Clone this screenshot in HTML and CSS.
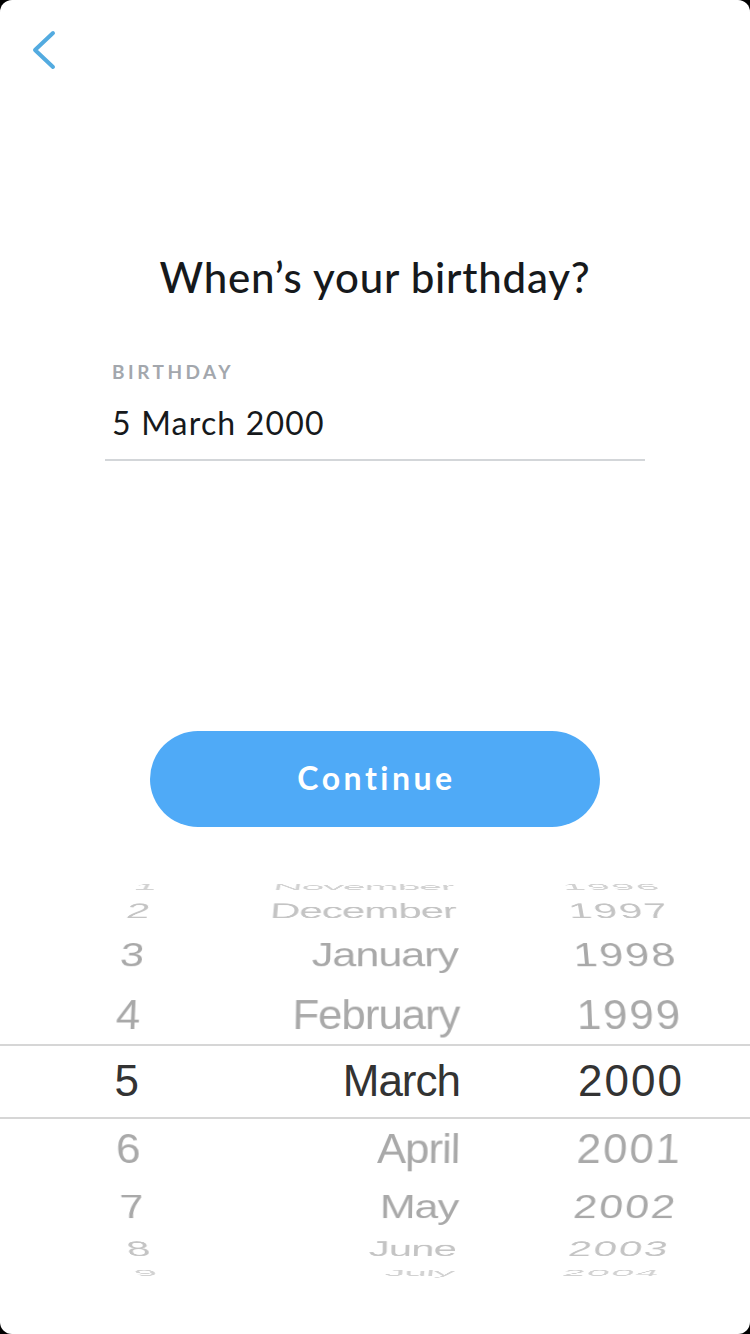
FILE: index.html
```html
<!DOCTYPE html>
<html lang="en">
<head>
<meta charset="utf-8">
<title>When's your birthday?</title>
<link rel="stylesheet" href="styles.css">
</head>
<body>
<div class="screen">
  <div class="topbar">
    <svg class="back" width="24" height="40" viewBox="0 0 24 40" aria-label="Back">
      <path d="M21 3 L3 20 L21 37" fill="none" stroke="#53abe0" stroke-width="4" stroke-linecap="round" stroke-linejoin="round"/>
    </svg>
  </div>
  <h1 class="title">When’s your birthday?</h1>
  <div class="field">
    <div class="label">BIRTHDAY</div>
    <div class="value">5 March 2000</div>
  </div>
  <button class="continue">Continue</button>
  <div class="picker">
    <div class="prow r-4"><span class="d">1</span><span class="m">November</span><span class="y">1996</span></div>
    <div class="prow r-3"><span class="d">2</span><span class="m">December</span><span class="y">1997</span></div>
    <div class="prow r-2"><span class="d">3</span><span class="m">January</span><span class="y">1998</span></div>
    <div class="prow r-1"><span class="d">4</span><span class="m">February</span><span class="y">1999</span></div>
    <div class="prow r0"><span class="d">5</span><span class="m">March</span><span class="y">2000</span></div>
    <div class="prow r1"><span class="d">6</span><span class="m">April</span><span class="y">2001</span></div>
    <div class="prow r2"><span class="d">7</span><span class="m">May</span><span class="y">2002</span></div>
    <div class="prow r3"><span class="d">8</span><span class="m">June</span><span class="y">2003</span></div>
    <div class="prow r4"><span class="d">9</span><span class="m">July</span><span class="y">2004</span></div>
    <div class="band"></div>
  </div>
</div>
</body>
</html>
```
FILE: styles.css
```css
html, body {
  margin: 0;
  padding: 0;
  background: #000;
}
.screen {
  width: 750px;
  height: 1334px;
  background: #fff;
  border-radius: 12px;
  overflow: hidden;
  display: flex;
  flex-direction: column;
  font-family: Lato, "Open Sans", sans-serif;
}
.topbar {
  height: 100px;
  box-sizing: border-box;
  padding: 30px 0 0 32px;
}
.back {
  display: block;
}
.title {
  margin: 152px 0 0;
  font-size: 42px;
  line-height: 50px;
  font-weight: 500;
  letter-spacing: 0.8px;
  color: #16191c;
  text-align: center;
}
.field {
  margin: 58px 0 0 105px;
  width: 540px;
  border-bottom: 2px solid #d3d6d9;
  padding-bottom: 16px;
}
.label {
  padding-left: 7px;
  font-size: 19px;
  line-height: 24px;
  font-weight: 700;
  letter-spacing: 3.5px;
  color: #a3a7ad;
}
.value {
  margin-top: 19px;
  padding-left: 7px;
  font-size: 32px;
  line-height: 40px;
  letter-spacing: 1.2px;
  color: #16191c;
}
.continue {
  margin: 270px auto 0;
  width: 450px;
  height: 96px;
  border: none;
  border-radius: 48px;
  background: #4faaf7;
  color: #fff;
  font-family: Lato, "Open Sans", sans-serif;
  font-size: 32px;
  font-weight: 700;
  letter-spacing: 3.5px;
  padding: 0 0 4px 3px;
}
.picker {
  margin-top: 51px;
  height: 406px;
  overflow: hidden;
  display: grid;
  grid-template-columns: 750px;
  align-items: center;
  font-family: "Liberation Sans", Arial, sans-serif;
}
.prow, .band {
  grid-area: 1 / 1;
}
.prow {
  display: flex;
  height: 68px;
  align-items: center;
  font-size: 44px;
  line-height: 68px;
  color: #a9a9a9;
  white-space: nowrap;
}
.d {
  width: 139px;
  text-align: right;
}
.m {
  width: 321px;
  text-align: right;
  letter-spacing: -1px;
}
.y {
  width: 224px;
  text-align: right;
  letter-spacing: 2px;
}
.band {
  height: 75px;
  box-sizing: border-box;
  border-top: 2px solid #d6d6d6;
  border-bottom: 2px solid #d6d6d6;
}
.r0 { color: #333; }
.r-1 { transform: translateY(-66px) perspective(2000px) translateZ(-12px) rotateX(20deg); }
.r-2 { transform: translateY(-126px) perspective(2000px) translateZ(-46px) rotateX(40deg); }
.r-3 { transform: translateY(-170px) perspective(2000px) translateZ(-98px) rotateX(60deg); color: #c4c4c4; }
.r-4 { transform: translateY(-194px) perspective(2000px) translateZ(-164px) rotateX(78deg); color: #d2d2d2; }
.r1 { transform: translateY(68px) perspective(2000px) translateZ(-12px) rotateX(-20deg); }
.r2 { transform: translateY(126px) perspective(2000px) translateZ(-46px) rotateX(-40deg); }
.r3 { transform: translateY(168px) perspective(2000px) translateZ(-98px) rotateX(-60deg); color: #c4c4c4; }
.r4 { transform: translateY(192px) perspective(2000px) translateZ(-164px) rotateX(-78deg); color: #d2d2d2; }
```
